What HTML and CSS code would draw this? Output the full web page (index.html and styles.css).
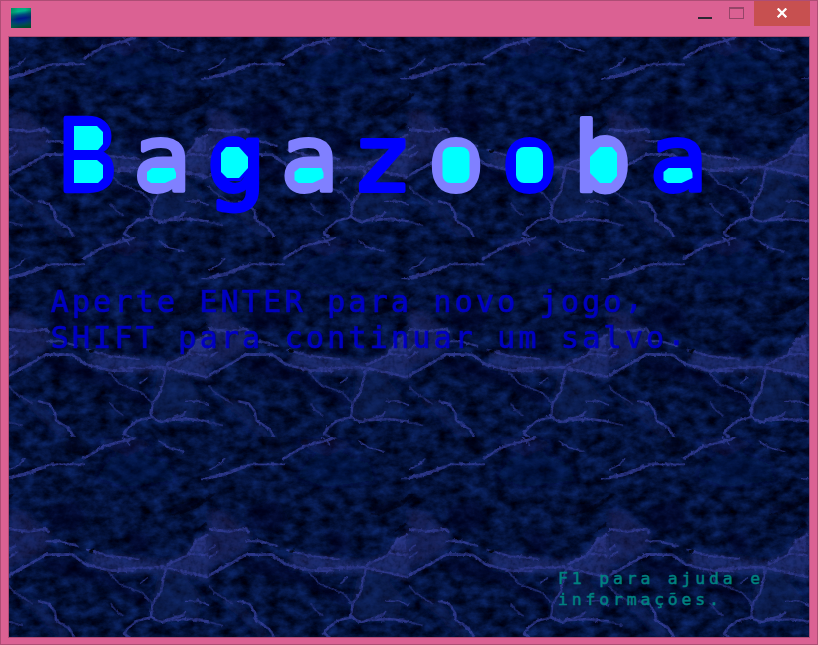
FILE: index.html
```html
<!DOCTYPE html>
<html lang="pt-BR">
<head>
<meta charset="utf-8">
<title>Bagazooba</title>
<link rel="stylesheet" href="styles.css">
</head>
<body>
<div class="window">
  <header class="titlebar">
    <div class="app-icon"></div>
    <div class="controls">
      <svg class="ctl-icons" width="56" height="26" viewBox="0 0 56 26" shape-rendering="crispEdges">
        <rect x="0" y="17" width="14" height="2" fill="#2b2733"/>
        <path d="M31 7h15v12h-15zM32 9v9h13V9z" fill="#954568" fill-rule="evenodd"/>
      </svg>
      <div class="close">
        <svg width="12" height="10" viewBox="0 0 12 10"><path d="M1.7 .5 10.3 9.2M10.3 .5 1.7 9.2" stroke="#fff" stroke-width="2.3" fill="none"/></svg>
      </div>
    </div>
  </header>
  <main class="stage">
    <svg class="rock" width="800" height="600" viewBox="0 0 800 600">
      <defs>
        <filter id="grain" x="0" y="0" width="100%" height="100%" color-interpolation-filters="sRGB">
          <feTurbulence type="fractalNoise" baseFrequency=".07 .1" numOctaves="5" seed="8"/>
          <feColorMatrix values=".1 0 0 0 -.036  .22 0 0 0 -.04  .5 0 0 0 -.02  0 0 0 0 1"/>
        </filter>
        <filter id="rough" x="0" y="0" width="100%" height="100%" color-interpolation-filters="sRGB">
          <feTurbulence type="fractalNoise" baseFrequency=".25" numOctaves="3" seed="3" result="n"/>
          <feDisplacementMap in="SourceGraphic" in2="n" scale="5" xChannelSelector="R" yChannelSelector="G" result="d"/>
          <feColorMatrix in="n" values="0 0 0 0 0  0 0 0 0 0  0 0 0 0 0  2 0 0 0 -.2" result="m"/>
          <feComposite in="d" in2="m" operator="in"/>
        </filter>
        <filter id="soft" filterUnits="userSpaceOnUse" x="-700" y="-100" width="2000" height="800"><feGaussianBlur stdDeviation="10"/></filter>
        <pattern id="tile" width="200" height="200" patternUnits="userSpaceOnUse">
          <g transform="scale(.33333)" fill="none" stroke-linecap="round" stroke-linejoin="round">
            <g filter="url(#soft)">
              <g id="patches">
              <path d="M0 220 50 225 95 270 125 285 115 335 40 375 0 390z" fill="#232d72" opacity=".6"/>
              <path d="M250 345 350 360 470 375 530 355 570 300 600 290V430L520 405 330 405 240 385z" fill="#26357e" opacity=".8"/>
              <path d="M450 400 510 395 580 480 570 545 440 555 425 510z" fill="#162862" opacity=".55"/>
              <path d="M20 480 90 490 145 555 190 600H150L90 540z" fill="#1b286b" opacity=".5"/>
              <path d="M110 215 200 190 235 250 190 285 130 270z" fill="#00021d" opacity=".6"/>
              <path d="M345 280 410 290 425 330 380 355z" fill="#00021d" opacity=".55"/>
              <path d="M160 20 190 50 230 30 200 0zM490 210 590 180 550 220 480 235z" fill="#000014" opacity=".8"/>
              <path d="M90 365 190 370 280 410 420 480 410 510 280 440 130 410z" fill="#00021d" opacity=".55"/>
              <path d="M310 60 390 45 480 80 500 130 350 150 260 120z" fill="#07134a" opacity=".45"/>
              <path d="M250 10 350 60 440 20 370 0z" fill="#1b2568" opacity=".3"/>
              </g>
              <use href="#patches" x="600"/>
              <use href="#patches" x="-600"/>
            </g>
            <g stroke="#353f9a">
              <path d="M-5 123 45 113 125 82 225 82" stroke-width="6"/>
              <path d="M0 122 45 112 105 90" stroke-width="10"/>
              <path d="M225 64 285 28 360 8 378 0" stroke-width="8"/>
              <path d="M340 0Q355 12 362 24M0 98 30 84 48 65M450 12 480 32 525 43" stroke-width="4"/>
              <path d="M0 277 60 283 112 276 119 285" stroke-width="8"/>
              <path d="M0 415 65 380 112 352 190 353 230 382 300 400 370 402" stroke-width="8"/>
              <path d="M112 313 155 313 205 327M235 338 300 357 390 366" stroke-width="6"/>
              <path d="M330 395 460 390 595 420M475 383 535 355 565 310 595 294M540 350 595 355" stroke-width="7"/>
              <path d="M560 305 590 300 592 345 550 340z" fill="#353f9a" stroke="none" opacity=".6"/>
              <path d="M470 398 455 465 431 500 426 538Q455 563 475 550L540 546 600 553" stroke-width="7"/>
              <path d="M426 541 385 551 355 575 345 590 360 600M470 550 520 535 529 525" stroke-width="7"/>
              <path d="M90 493 120 500 138 527 141 550 180 575 195 600" stroke-width="7"/>
              <path d="M306 500 320 520 342 535M300 405 330 440 400 467 430 500M0 447 15 465 70 500M0 555 40 565" stroke-width="5" stroke="#26317c"/>
              <path d="M0 338 18 325M0 362 25 345" stroke-width="6"/>
              <path d="M578 125H600M530 493 570 492 600 505M395 438 415 422" stroke-width="4"/>
            </g>
            <path d="M480 235 530 215 570 195 600 177V190L565 212 510 234z M0 170 18 170 0 188z M550 290 590 255 595 264z" fill="#00000f" opacity=".8"/>
            <path d="M242 341 255 338 252 345 244 346z" fill="#000" stroke="#000" stroke-width="3"/>
          </g>
        </pattern>
      </defs>
      <rect width="800" height="600" filter="url(#grain)"/>
      <rect width="800" height="600" fill="url(#tile)" opacity=".45"/>
      <rect width="800" height="600" fill="url(#tile)" filter="url(#rough)" opacity=".7"/>
    </svg>
    <div class="content">
      <svg class="logo" width="800" height="190" viewBox="9 37 800 190" role="heading" aria-label="Bagazooba">
        <g class="letters">
          <text class="blue" transform="translate(87 190.5) scale(1.06 1.08)">B</text>
          <text class="lilac" transform="translate(162 190.5) scale(1.06 1)">a</text>
          <text class="blue" transform="translate(236.5 190.5) scale(1.08 1.02)">g</text>
          <text class="lilac" transform="translate(309.500 190.5) scale(1.06 1)">a</text>
          <text class="blue" transform="translate(382 190.5) scale(1.12 1)">z</text>
          <text class="lilac" transform="translate(456 190.5) scale(1.03 1)">o</text>
          <text class="blue" transform="translate(529.5 190.5) scale(1.03 1)">o</text>
          <text class="lilac" transform="translate(602 190.5) scale(1.06 1.04)">b</text>
          <text class="blue" transform="translate(678.5 190.5) scale(1.06 1)">a</text>
        </g>
        <g class="counters">
          <path class="blue" d="M74 126H97L103 132V144L98 150H74zM74 160H97L103 165V178L98 183H74z"/>
          <path class="lilac" d="M152 168H174L176 173V178L165 183H151L147 180V172z"/>
          <path class="blue" d="M226 147H239L248 157V168L239 178H227L221 172V153z"/>
          <path class="lilac" d="M299.500 168H321.500L323.500 173V178L312.500 183H298.500L294.500 180V172z"/>
          <rect class="lilac" x="442.500" y="147" width="27" height="36" rx="8"/>
          <rect class="blue" x="516" y="147" width="27" height="36" rx="8"/>
          <path class="lilac" d="M600 147H612L617 153V176L611 183H600L590 173V157z"/>
          <path class="blue" d="M668.500 168H690.500L692.500 173V178L681.500 183H667.500L663.500 180V172z"/>
        </g>
      </svg>
      <p class="prompt">Aperte ENTER para novo jogo<span class="lift">,</span><br>SHIFT para continuar um salvo<span class="lift">.</span></p>
      <p class="help">F1 para ajuda e<br>informações.</p>
    </div>
  </main>
</div>
</body>
</html>
```
FILE: styles.css
```css
* { box-sizing: border-box; }
body { margin: 0; }
.window {
  width: 818px;
  height: 645px;
  background: #db6193;
  border: 1px solid #ae4d75;
  padding: 0 7px 7px;
}
.titlebar {
  display: flex;
  justify-content: space-between;
  height: 35px;
}
.app-icon {
  width: 20px;
  height: 20px;
  margin: 7px 0 0 3px;
  background:
    linear-gradient(90deg, #0070407a, transparent 35%, transparent 70%, #004d3060),
    linear-gradient(172deg, #00a878 0%, #00b58a 20%, #004a80 36%, #001586 52%, #00308a 65%, #004a58 80%, #004a18 100%);
}
.controls { display: flex; }
.ctl-icons { margin-top: -1px; }
.close {
  display: flex;
  justify-content: center;
  align-items: center;
  width: 56px;
  height: 25px;
  padding-bottom: 2px;
  background: #c75050;
}
.stage {
  display: grid;
  width: 802px;
  height: 602px;
  border: 1px solid #ae4d75;
}
.rock, .content { grid-area: 1 / 1; }
.rock { display: block; }
.content { z-index: 1; width: 800px; height: 600px; }
.logo { display: block; }
.letters text {
  font: 92px "DejaVu Sans Mono", monospace;
  text-anchor: middle;
  stroke-width: 4px;
  stroke-linejoin: round;
}
.blue { fill: #00f; stroke: #00f; }
.lilac { fill: #8080ff; stroke: #8080ff; }
.counters > * {
  fill: #0ff;
  stroke-width: 6px;
  paint-order: stroke;
}
.prompt {
  margin: 57px 0 0 42px;
  color: #0000c0;
  font: 30px/36px "DejaVu Sans Mono", monospace;
  letter-spacing: 3.2px;
  -webkit-text-stroke: .6px #0000c0;
  white-space: nowrap;
}
.help {
  margin: 212px 0 0 549px;
  color: #008080;
  font: 16.500px/21px "DejaVu Sans Mono", monospace;
  letter-spacing: 3.8px;
  -webkit-text-stroke: .5px #008080;
  white-space: nowrap;
}
.lift { display: inline-block; transform: translateY(-3px); }
```
